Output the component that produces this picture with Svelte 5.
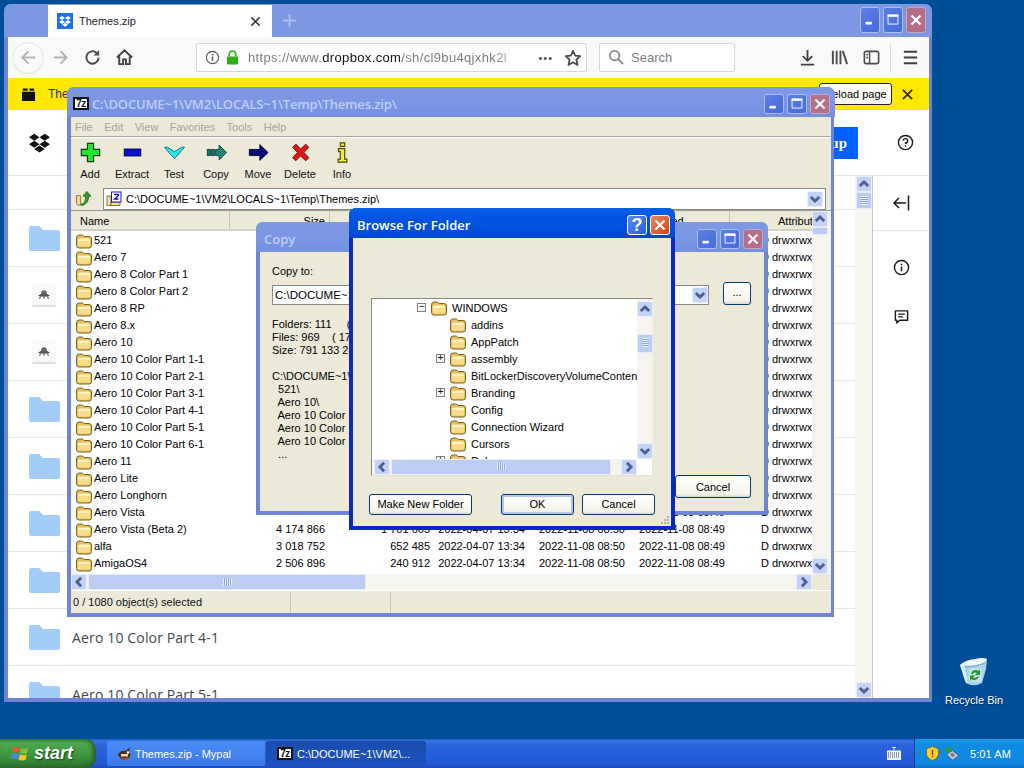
<script lang="ts">
	// 7-Zip file list behind the dialogs
	const names = [
		'521', 'Aero 7', 'Aero 8 Color Part 1', 'Aero 8 Color Part 2', 'Aero 8 RP', 'Aero 8.x', 'Aero 10',
		'Aero 10 Color Part 1-1', 'Aero 10 Color Part 2-1', 'Aero 10 Color Part 3-1', 'Aero 10 Color Part 4-1',
		'Aero 10 Color Part 5-1', 'Aero 10 Color Part 6-1', 'Aero 11', 'Aero Lite', 'Aero Longhorn', 'Aero Vista'
	];
	const sized = [
		{ name: 'Aero Vista (Beta 2)', size: '4 174 866', packed: '1 701 665' },
		{ name: 'alfa', size: '3 018 752', packed: '652 485' },
		{ name: 'AmigaOS4', size: '2 506 896', packed: '240 912' }
	];
	const rows = [...names.map((name) => ({ name, size: '', packed: '' })), ...sized];

	const menus = ['File', 'Edit', 'View', 'Favorites', 'Tools', 'Help'];
	const tools = ['Add', 'Extract', 'Test', 'Copy', 'Move', 'Delete', 'Info'];

	// Dropbox page behind everything
	const pageRows = [
		{ kind: 'folder', label: 'Aero 8.x' },
		{ kind: 'file', label: 'Aero 9.zip' },
		{ kind: 'file', label: 'Aero 9 RP.zip' },
		{ kind: 'folder', label: 'Aero 10' },
		{ kind: 'folder', label: 'Aero 10 Color Part 1-1' },
		{ kind: 'folder', label: 'Aero 10 Color Part 2-1' },
		{ kind: 'folder', label: 'Aero 10 Color Part 3-1' },
		{ kind: 'folder', label: 'Aero 10 Color Part 4-1' },
		{ kind: 'folder', label: 'Aero 10 Color Part 5-1' }
	];

	const tree = [
		{ label: 'WINDOWS', depth: 0, sign: '−' },
		{ label: 'addins', depth: 1, sign: '' },
		{ label: 'AppPatch', depth: 1, sign: '' },
		{ label: 'assembly', depth: 1, sign: '+' },
		{ label: 'BitLockerDiscoveryVolumeContent', depth: 1, sign: '' },
		{ label: 'Branding', depth: 1, sign: '+' },
		{ label: 'Config', depth: 1, sign: '' },
		{ label: 'Connection Wizard', depth: 1, sign: '' },
		{ label: 'Cursors', depth: 1, sign: '' },
		{ label: 'Debug', depth: 1, sign: '+' }
	];

	const copyInfo = 'Folders: 111     ( 111)\nFiles: 969    ( 17 969)\nSize: 791 133 248\n\nC:\\DOCUME~1\\VM2\\LOCALS~1\\Temp\\\n  521\\\n  Aero 10\\\n  Aero 10 Color Part 1-1\\\n  Aero 10 Color Part 2-1\\\n  Aero 10 Color Part 3-1\\\n  ...';
</script>

{#snippet folder()}
	<svg class="xpfolder" viewBox="0 0 16 16" aria-hidden="true">
		<path d="M.5 5 Q.5 2 3 2 H6 Q7 2 8 3.500 H13 Q15.500 3.500 15.500 6 V12.500 Q15.500 15 13 15 H3 Q.5 15 .5 12.500 Z" fill="#e6bd58" stroke="#7c6526" />
		<path d="M1.800 7 Q1.800 5.500 3.500 5.500 H12.500 Q14.200 5.500 14.200 7 V8 H1.800 Z" fill="#fdf2c2" />
		<path d="M1.800 8 H14.200 V12 Q14.200 13.700 12.500 13.700 H3.500 Q1.800 13.700 1.800 12 Z" fill="#f8dc8a" />
	</svg>
{/snippet}

{#snippet chevron(dir)}
	<span class="sbtn {dir}">
		<svg viewBox="0 0 10 10" aria-hidden="true"><path d="M2 6.500 L5 3.500 L8 6.500" fill="none" stroke="#4a6090" stroke-width="2" /></svg>
	</span>
{/snippet}

{#snippet sevenz()}
	<span class="sevenz">7z</span>
{/snippet}

{#snippet dropbox(color)}
	<svg viewBox="0 0 24 24" aria-hidden="true">
		<path fill={color} d="M6 2 L12 6 L6 10 L0 6Z M18 2 L24 6 L18 10 L12 6Z M6 10 L12 14 L6 18 L0 14Z M18 10 L24 14 L18 18 L12 14Z M12 15.500 L18 19.500 L12 23.500 L6 19.500Z" />
	</svg>
{/snippet}

{#snippet captionBtns(active)}
	<span class="capbtn" class:active>
		<svg viewBox="0 0 20 20" aria-hidden="true"><rect x="5" y="12" width="7" height="3" fill="#fff" /></svg>
	</span>
	<span class="capbtn" class:active>
		<svg viewBox="0 0 20 20" aria-hidden="true"><rect x="4.500" y="4.500" width="11" height="10" fill="none" stroke="#fff" /><rect x="4" y="4" width="12" height="2.500" fill="#fff" /></svg>
	</span>
	<span class="capbtn close" class:active>
		<svg viewBox="0 0 20 20" aria-hidden="true"><path d="M5 5 L15 15 M15 5 L5 15" stroke="#fff" stroke-width="2.400" /></svg>
	</span>
{/snippet}

<div class="desktop">
	<div class="spacer"></div>

	<!-- Mypal browser -->
	<section class="window browser">
		<div class="browser-title">
			<div class="tab">
				<span class="favicon">{@render dropbox('#fff')}</span>
				<span class="tab-text">Themes.zip</span>
				<svg class="tab-x" viewBox="0 0 12 12" aria-hidden="true"><path d="M1.500 1.500 L10.500 10.500 M10.500 1.500 L1.500 10.500" stroke="#333" stroke-width="1.600" /></svg>
			</div>
			<svg class="newtab" viewBox="0 0 16 16" aria-hidden="true"><path d="M8 1 V15 M1 8 H15" stroke="#a9bff0" stroke-width="2" /></svg>
			<div class="caps tall">{@render captionBtns(false)}</div>
		</div>

		<div class="navbar">
			<span class="navbtn back">
				<svg viewBox="0 0 20 20" aria-hidden="true"><path d="M17 10 H4 M10 3.500 L3.500 10 L10 16.500" fill="none" stroke="#b4b4b6" stroke-width="2" /></svg>
			</span>
			<span class="navbtn">
				<svg viewBox="0 0 20 20" aria-hidden="true"><path d="M3 10 H16 M10 3.500 L16.500 10 L10 16.500" fill="none" stroke="#b4b4b6" stroke-width="2" /></svg>
			</span>
			<span class="navbtn">
				<svg viewBox="0 0 20 20" aria-hidden="true"><path d="M16.500 10 A6.500 6.500 0 1 1 14.400 5.200" fill="none" stroke="#4a4a4f" stroke-width="2" /><path d="M17 2 V8 H11 Z" fill="#4a4a4f" /></svg>
			</span>
			<span class="navbtn">
				<svg viewBox="0 0 20 20" aria-hidden="true"><path d="M2 10 L10 2.500 L18 10 M4.500 9 V17 H8.500 V12 H11.500 V17 H15.500 V9" fill="none" stroke="#3f3f44" stroke-width="2" /></svg>
			</span>

			<div class="urlbar">
				<svg class="info" viewBox="0 0 16 16" aria-hidden="true"><circle cx="8" cy="8" r="6.500" fill="none" stroke="#55555a" stroke-width="1.200" /><rect x="7.200" y="7" width="1.600" height="4.500" fill="#55555a" /><rect x="7.200" y="4.200" width="1.600" height="1.600" fill="#55555a" /></svg>
				<svg class="lock" viewBox="0 0 14 16" aria-hidden="true"><path d="M3.500 7 V4.500 A3.500 3.500 0 0 1 10.500 4.500 V7" fill="none" stroke="#37b01f" stroke-width="1.800" /><rect x="1" y="7" width="12" height="8.500" rx="1" fill="#2fae17" /></svg>
				<span class="url">https://www.<b>dropbox.com</b>/sh/cl9bu4qjxhk2l</span>
				<span class="dots">•••</span>
				<svg class="star" viewBox="0 0 20 20" aria-hidden="true"><path d="M10 2 L12.400 7.300 L18 8 L13.800 11.900 L15 17.700 L10 14.800 L5 17.700 L6.200 11.900 L2 8 L7.600 7.300 Z" fill="none" stroke="#4a4a4f" stroke-width="2" stroke-linejoin="round" /></svg>
			</div>

			<div class="searchbar">
				<svg viewBox="0 0 18 18" aria-hidden="true"><circle cx="7" cy="7" r="5" fill="none" stroke="#858589" stroke-width="1.800" /><path d="M10.800 10.800 L16 16" stroke="#858589" stroke-width="2" /></svg>
				<span>Search</span>
			</div>

			<span class="navbtn first">
				<svg viewBox="0 0 20 20" aria-hidden="true"><path d="M10 2 V13 M5 8.500 L10 13.500 L15 8.500 M3 17.500 H17" fill="none" stroke="#3f3f44" stroke-width="1.900" /></svg>
			</span>
			<span class="navbtn">
				<svg viewBox="0 0 20 20" aria-hidden="true"><path d="M3 3 V17 M7 3 V17 M11 3 V17 M13.500 3 L18 17" fill="none" stroke="#4a4a4f" stroke-width="2" /></svg>
			</span>
			<span class="navbtn">
				<svg viewBox="0 0 20 20" aria-hidden="true"><rect x="2.500" y="3.500" width="15" height="13" rx="2" fill="none" stroke="#4a4a4f" stroke-width="1.700" /><path d="M8 3.500 V16.500 M4.500 7 H6.500 M4.500 10 H6.500" stroke="#4a4a4f" stroke-width="1.500" /></svg>
			</span>
			<span class="navsep"></span>
			<span class="navbtn">
				<svg viewBox="0 0 20 20" aria-hidden="true"><path d="M3 4 H17 M3 10 H17 M3 16 H17" stroke="#3f3f44" stroke-width="2" /></svg>
			</span>
		</div>

		<div class="notice">
			<svg class="notice-icon" viewBox="0 0 16 16" aria-hidden="true"><path d="M1 5 H15 V15 H1 Z M2 1.500 H7 V4 H2 Z M9 1.500 H14 V4 H9 Z" fill="#111" /></svg>
			<span class="notice-text">The</span>
			<span class="reload">Reload page</span>
			<svg class="notice-x" viewBox="0 0 12 12" aria-hidden="true"><path d="M1 1 L11 11 M11 1 L1 11" stroke="#3a2a00" stroke-width="2" /></svg>
		</div>

		<div class="page">
			<div class="page-head">
				<span class="logo">{@render dropbox('#111')}</span>
				<span class="signup">Sign up</span>
				<svg class="help" viewBox="0 0 18 18" aria-hidden="true"><circle cx="9" cy="9" r="7.500" fill="none" stroke="#1e1919" stroke-width="1.500" /><path d="M6.700 7 A2.300 2.300 0 1 1 9 9.500 V10.500 M9 12 V13.500" fill="none" stroke="#1e1919" stroke-width="1.500" /></svg>
			</div>
			<div class="page-body">
				<div class="page-list">
					<div class="page-crumb"></div>
					{#each pageRows as row (row.label)}
						<div class="page-row">
							{#if row.kind === 'folder'}
								<svg class="pfolder" viewBox="0 0 31 25" aria-hidden="true"><path d="M0 2 Q0 0 2 0 H10 L14 4 H29 Q31 4 31 6 V23 Q31 25 29 25 H2 Q0 25 0 23 Z" fill="#a3ccf6" /></svg>
							{:else}
								<span class="tile">
									<svg viewBox="0 0 16 12" aria-hidden="true"><path d="M4.500 5 Q4.500 1 8 1 Q11.500 1 11.500 5 Z" fill="#66666b" /><path d="M1 7.500 Q4 4.500 8 4.500 Q12 4.500 15 7.500 Q12 8.500 8 8.500 Q4 8.500 1 7.500 Z" fill="#55555a" /><path d="M4 8 L3 11 M8 8 V11 M12 8 L13 11" stroke="#66666b" stroke-width="1.300" /></svg>
								</span>
							{/if}
							<span class="page-name">{row.label}</span>
						</div>
					{/each}
				</div>
				<div class="page-scroll">
					{@render chevron('up')}
					<span class="sthumb v page-thumb"><i></i></span>
					<span class="fill"></span>
					{@render chevron('down')}
				</div>
				<div class="rail">
					<div class="rail-top">
						<svg viewBox="0 0 20 20" aria-hidden="true"><path d="M15 10 H3 M8 5 L3 10 L8 15 M17.500 2.500 V17.500" fill="none" stroke="#1e1919" stroke-width="1.500" /></svg>
					</div>
					<svg viewBox="0 0 18 18" aria-hidden="true"><circle cx="9" cy="9" r="7.500" fill="none" stroke="#1e1919" stroke-width="1.500" /><path d="M9 8 V13 M9 5 V6.500" stroke="#1e1919" stroke-width="1.600" /></svg>
					<svg viewBox="0 0 18 18" aria-hidden="true"><path d="M2.500 3 H15.500 V13 H7 L4 16 V13 H2.500 Z" fill="none" stroke="#1e1919" stroke-width="1.500" stroke-linejoin="round" /><path d="M5.500 6.500 H12.500 M5.500 9.500 H10.500" stroke="#1e1919" stroke-width="1.300" /></svg>
				</div>
			</div>
		</div>
	</section>

	<!-- 7-Zip file manager -->
	<section class="window zip">
		<header class="wtitle">
			{@render sevenz()}
			<span class="wtitle-text faded">C:\DOCUME~1\VM2\LOCALS~1\Temp\Themes.zip\</span>
			<div class="caps">{@render captionBtns(false)}</div>
		</header>
		<div class="zip-inner">
			<nav class="menu">
				{#each menus as m (m)}<span>{m}</span>{/each}
			</nav>
			<div class="tools">
				{#each tools as t (t)}
					<div class="tool">
						<svg viewBox="0 0 24 24" aria-hidden="true">
							{#if t === 'Add'}
								<path d="M8.500 1.500 H15.500 V8.500 H22.500 V15.500 H15.500 V22.500 H8.500 V15.500 H1.500 V8.500 H8.500 Z" fill="#1fe62b" stroke="#0a3c10" stroke-width="1.300" />
							{:else if t === 'Extract'}
								<rect x="2.500" y="8" width="19" height="8" fill="#0a12c8" stroke="#06064a" />
							{:else if t === 'Test'}
								<path d="M.5 6 H4 L12 11 L20 6 H23.500 L12 19 Z" fill="#25e8e8" stroke="#0d6d6d" />
							{:else if t === 'Copy'}
								<path d="M11 8.500 H15 V3.500 L23.500 12 L15 20.500 V15.500 H11 Z" fill="#16857c" stroke="#0a3d40" /><rect x="1.500" y="8.500" width="3.500" height="7" fill="#127a70" stroke="#0a3d40" /><rect x="6.500" y="8.500" width="3" height="7" fill="#127a70" stroke="#0a3d40" />
							{:else if t === 'Move'}
								<path d="M1.500 8.500 H13.500 V3 L23 12 L13.500 21 V15.500 H1.500 Z" fill="#0a0a78" stroke="#05052e" />
							{:else if t === 'Delete'}
								<path d="M3 6 L7 2.500 L12 8 L18 2.500 L21.500 6 L16 12 L21.500 18 L18 21.500 L12 16 L6.500 21.500 L3 18 L8.500 12 Z" fill="#dc1818" stroke="#6a0a0a" />
							{:else}
								<path d="M9.500 1 H14.500 V5 H9.500 Z M7.500 7.500 H14.500 V19.500 H17 V23 H7 V19.500 H9.500 V11 H7.500 Z" fill="#f4ee30" stroke="#4a4400" stroke-width="1.300" />
							{/if}
						</svg>
						<span>{t}</span>
					</div>
				{/each}
			</div>
			<div class="addr">
				<svg class="upfolder" viewBox="0 0 18 18" aria-hidden="true"><path d="M1.500 6 H6 V16 H3 L1.500 14 Z" fill="#f4dc80" stroke="#8c7430" /><path d="M6 15.500 Q12 14 11 6.500 H8.500 L12.500 1.500 L17 6.500 H14.500 Q14.500 14 8 16.500 Z" fill="#2f9e2f" stroke="#1a5a1a" stroke-width=".8" /></svg>
				<div class="combo">
					<svg class="zicon" viewBox="0 0 16 16" aria-hidden="true"><path d="M1 5 H5 V14.500 H1 Z" fill="#f3e09a" stroke="#8c7430" /><path d="M5 14.500 H14 V11 H5 Z" fill="#f3e09a" stroke="#8c7430" /><rect x="5.500" y="1" width="9.500" height="10" fill="#fff" stroke="#1414b4" /><path d="M8 3.500 H12.500 V4.500 L8.500 8 H12.500" fill="none" stroke="#1414b4" stroke-width="1.300" /></svg>
					<span class="combo-text">C:\DOCUME~1\VM2\LOCALS~1\Temp\Themes.zip\</span>
					{@render chevron('down')}
				</div>
			</div>

			<div class="list">
				<div class="list-main">
					<div class="grid head">
						<span class="c-name">Name</span>
						<span class="num">Size</span>
						<span class="num">Packed Size</span>
						<span>Modified</span>
						<span>Created</span>
						<span>Accessed</span>
						<span class="attr">Attributes</span>
					</div>
					<div class="rows">
						{#each rows as r (r.name)}
							<div class="grid row">
								<span class="c-name">{@render folder()}{r.name}</span>
								<span class="num">{r.size}</span>
								<span class="num">{r.packed}</span>
								<span class="num">2022-04-07 13:34</span>
								<span class="num">2022-11-08 08:50</span>
								<span class="num">2022-11-08 08:49</span>
								<span class="attrv">D drwxrwxrwx</span>
							</div>
						{/each}
					</div>
					<div class="hscroll">
						{@render chevron('left')}
						<span class="sthumb h zip-thumb"><i></i></span>
						<span class="fill"></span>
						{@render chevron('right')}
					</div>
				</div>
				<div class="vscroll">
					{@render chevron('up')}
					<span class="sthumb v zip-vthumb"></span>
					<span class="fill"></span>
					{@render chevron('down')}
					<span class="corner"></span>
				</div>
			</div>

			<footer class="status">
				<span class="st1">0 / 1080 object(s) selected</span>
				<span class="st2"></span>
				<span class="st3"></span>
			</footer>
		</div>
	</section>

	<!-- Copy dialog -->
	<section class="window copy">
		<header class="wtitle">
			<span class="wtitle-text faded">Copy</span>
			<div class="caps">{@render captionBtns(false)}</div>
		</header>
		<div class="copy-inner">
			<div class="copy-label">Copy to:</div>
			<div class="copy-row">
				<div class="copy-input">
					<span>C:\DOCUME~1\VM2\LOCALS~1\Temp\</span>
					{@render chevron('down')}
				</div>
				<span class="btn dots-btn">...</span>
			</div>
			<pre class="copy-info">{copyInfo}</pre>
			<div class="copy-foot"><span class="btn copy-cancel">Cancel</span></div>
		</div>
	</section>

	<!-- Browse For Folder dialog -->
	<section class="window browse">
		<header class="wtitle active">
			<span class="wtitle-text">Browse For Folder</span>
			<div class="caps browse-caps">
				<span class="capbtn active help-btn">?</span>
				<span class="capbtn close active">
					<svg viewBox="0 0 20 20" aria-hidden="true"><path d="M5 5 L15 15 M15 5 L5 15" stroke="#fff" stroke-width="2.400" /></svg>
				</span>
			</div>
		</header>
		<div class="browse-inner">
			<div class="treebox">
				<div class="tree">
					{#each tree as node (node.label)}
						<div class="node" class:child={node.depth === 1}>
							<span class="expander" class:show={node.sign}>{node.sign}</span>
							{@render folder()}
							<span class="node-label">{node.label}</span>
						</div>
					{/each}
				</div>
				<div class="tree-v">
					{@render chevron('up')}
					<span class="sthumb v tree-thumb"><i></i></span>
					<span class="fill"></span>
					{@render chevron('down')}
				</div>
				<div class="tree-h">
					{@render chevron('left')}
					<span class="sthumb h tree-hthumb"><i></i></span>
					<span class="fill"></span>
					{@render chevron('right')}
				</div>
			</div>
			<div class="browse-btns">
				<span class="btn newfolder">Make New Folder</span>
				<span class="btn ok">OK</span>
				<span class="btn cancel">Cancel</span>
			</div>
			<svg class="grip" viewBox="0 0 10 10" aria-hidden="true"><path d="M7 1 h2 v2 h-2z M4 4 h2 v2 h-2z M7 4 h2 v2 h-2z M1 7 h2 v2 h-2z M4 7 h2 v2 h-2z M7 7 h2 v2 h-2z" fill="#b5b29f" /></svg>
		</div>
	</section>

	<!-- Recycle Bin -->
	<div class="recycle">
		<svg viewBox="0 0 30 30" aria-hidden="true">
			<path d="M1 8 L28 2 L27 12 L23 26 Q16 30 9 27 Z" fill="#a9d3ef" />
			<path d="M1 8 L6 24 Q7 27 9 27 L5 8 Z" fill="#dff0fa" />
			<path d="M1 8 Q6 3 16 2 Q24 0 28 2 Q26 7 15 8.500 Q6 10 1 8 Z" fill="#eef8fe" />
			<path d="M5 8.500 Q14 10 27 5 L26 7 Q16 11 6 10.500 Z" fill="#7fb4d8" />
			<rect x="10" y="11" width="13" height="14" rx="3" fill="#d6efd6" opacity=".6" />
			<path d="M12 16 Q15 11 20 14 L21 12 V18 H16 L18 16 Q15 14.500 13.500 17.500 Z M20 20 Q17 25 12 22 L11 24 V18.500 H16 L14 20.500 Q17 22 18.500 19.500 Z" fill="#1f9a2a" />
		</svg>
		<span>Recycle Bin</span>
	</div>

	<!-- Taskbar -->
	<footer class="taskbar">
		<div class="start">
			<svg viewBox="0 0 20 20" aria-hidden="true">
				<path d="M2 4 Q5 2.500 9 4 L8 9 Q5 7.500 1 9 Z" fill="#e8552e" />
				<path d="M10.500 4.500 Q14 6 18 4 L17 9.500 Q13 11 9.500 9.500 Z" fill="#7fc13a" />
				<path d="M1 10.500 Q4.500 9 8 10.500 L7 16 Q4 14.500 0 16 Z" fill="#4d83e0" />
				<path d="M9 11 Q13 12.500 16.500 11 L15.500 16.500 Q12 18 8 16.500 Z" fill="#f6c52e" />
			</svg>
			<span>start</span>
		</div>
		<div class="task light">
			<svg viewBox="0 0 16 16" aria-hidden="true"><path d="M1 9 Q3 4 9 5 L13 1 L12 6 Q15 9 12 12 Q8 15 4 13 Z" fill="#4a2f18" /><path d="M4 8 H11 V10.500 H4 Z" fill="#e9d9b8" /><path d="M3 11 Q7 13 11 11 L10 13.500 H5 Z" fill="#b4552a" /><circle cx="11" cy="6.500" r="1.300" fill="#fff" /></svg>
			<span>Themes.zip - Mypal</span>
		</div>
		<div class="task dark">
			{@render sevenz()}
			<span>C:\DOCUME~1\VM2\...</span>
		</div>
		<svg class="kbd" viewBox="0 0 14 13" aria-hidden="true"><rect x="0" y="3.500" width="14" height="9.500" fill="#f4f6fa" /><path d="M1 6 H13 M1 8 H13 M1 10 H13" stroke="#2a3a6a" stroke-dasharray="1 1" /><path d="M7 3.500 V0 M5 .5 H9" stroke="#e2e6f0" /></svg>
		<div class="tray">
			<svg class="shield" viewBox="0 0 14 16" aria-hidden="true"><path d="M7 .5 L13.500 3 V8 Q13.500 13 7 15.500 Q.5 13 .5 8 V3 Z" fill="#f5d230" stroke="#6d5a10" stroke-width=".8" /><path d="M6.200 4 H7.800 V9.500 H6.200 Z M6.200 10.500 H7.800 V12 H6.200 Z" fill="#a33" /></svg>
			<svg class="netpc" viewBox="0 0 16 16" aria-hidden="true"><path d="M1 1.500 L7 .5 L8 5.500 L3 8 Z" fill="#2f9a40" /><path d="M3 9 L9 5 L15.500 10 L9 15 Z" fill="#c9d0d8" stroke="#3c4a66" stroke-width=".7" /><path d="M6 9 L9 7 L12 10 L9 12 Z" fill="#6d7f98" /></svg>
			<span>5:01 AM</span>
		</div>
	</footer>
</div>

<style>
	:global(body) {
		margin: 0;
		background: #004e98;
	}
	.desktop {
		position: relative;
		width: 1024px;
		height: 768px;
		overflow: hidden;
		background: #004e98;
		display: flex;
		flex-direction: column;
		font-family: "Liberation Sans", Arial, sans-serif;
		font-size: 11px;
		color: #000;
	}
	.spacer { flex: 1; }
	svg { display: block; flex: none; }

	/* Shared window chrome */
	.window {
		position: absolute;
		box-sizing: border-box;
		display: flex;
		flex-direction: column;
		background: #6f84d6;
		border-radius: 7px 7px 0 0;
	}
	.wtitle {
		flex: none;
		box-sizing: border-box;
		height: 30px;
		display: flex;
		align-items: center;
		padding: 3px 5px 0 6px;
		background: linear-gradient(#7e98e2, #7b97e4 40%, #7391e0);
		border-radius: 7px 7px 0 0;
		margin: 0 -4px;
	}
	.wtitle.active {
		background: linear-gradient(#0a5fe8, #0054e3 30%, #0050dc 70%, #0046c8);
	}
	.wtitle-text {
		font-family: "Open Sans", "Liberation Sans", sans-serif;
		font-size: 13px;
		font-weight: 600;
		color: #fff;
		white-space: nowrap;
	}
	.wtitle-text.faded { color: #bcd0f4; }
	.caps {
		margin-left: auto;
		display: flex;
		gap: 3px;
	}
	.capbtn {
		width: 20px;
		height: 20px;
		box-sizing: border-box;
		border: 1px solid #a9bdf0;
		border-radius: 3px;
		background: linear-gradient(135deg, #5b7fe4, #466ad8);
		display: block;
	}
	.capbtn svg { width: 18px; height: 18px; }
	.capbtn.close {
		background: #b56f88;
		border-color: #c3a6c0;
	}
	.capbtn.active {
		background: linear-gradient(135deg, #5a8bf0, #2a5fd8);
		border-color: #fff;
	}
	.capbtn.close.active {
		background: linear-gradient(135deg, #e88a5e, #d4401a);
	}
	.help-btn {
		color: #fff;
		font-family: "Liberation Sans", sans-serif;
		font-weight: 700;
		font-size: 18px;
		line-height: 19px;
		text-align: center;
	}
	.sevenz {
		flex: none;
		box-sizing: border-box;
		width: 16px;
		height: 13px;
		background: #fff;
		border: 2px solid #111;
		color: #111;
		font: 700 10px/9px "Liberation Sans", sans-serif;
		text-align: center;
		letter-spacing: -.5px;
	}

	/* Scrollbar pieces */
	.sbtn {
		flex: none;
		box-sizing: border-box;
		width: 16px;
		height: 16px;
		display: block;
		border: 1px solid #e8eefb;
		border-radius: 2px;
		background: #c3d2f5;
	}
	.sbtn svg { width: 14px; height: 14px; }
	.sbtn.down svg { transform: rotate(180deg); }
	.sbtn.left svg { transform: rotate(-90deg); }
	.sbtn.right svg { transform: rotate(90deg); }
	.sthumb {
		flex: none;
		box-sizing: border-box;
		display: block;
		background: #bccdf4;
		border: 1px solid #e4ebfb;
		border-radius: 2px;
	}
	.sthumb i {
		display: block;
		width: 9px;
		height: 7px;
		margin: 3px auto;
		background: repeating-linear-gradient(90deg, #e9effc 0 1px, #8ea6dc 1px 2px);
	}
	.sthumb.v { width: 16px; }
	.sthumb.v i {
		width: 7px;
		height: 9px;
		margin: 3px auto;
		background: repeating-linear-gradient(#e9effc 0 1px, #8ea6dc 1px 2px);
	}
	.fill { flex: 1; }

	/* Browser */
	.browser {
		left: 4px;
		top: 4px;
		width: 928px;
		height: 698px;
		padding: 0 3px 4px 4px;
	}
	.browser-title {
		flex: none;
		height: 33px;
		display: flex;
		align-items: flex-end;
		background: #7c98e3;
		margin: 0 -3px 0 -4px;
		padding: 0 3px 0 44px;
		border-radius: 7px 7px 0 0;
	}
	.tab {
		box-sizing: border-box;
		width: 224px;
		height: 32px;
		background: #fff;
		display: flex;
		align-items: center;
		padding: 0 11px 0 9px;
	}
	.favicon {
		width: 16px;
		height: 16px;
		background: #1e6ff0;
		padding: 2px;
		box-sizing: border-box;
		display: block;
	}
	.tab-text { margin-left: 6px; flex: 1; color: #222; }
	.tab-x { width: 11px; height: 11px; }
	.newtab { width: 15px; height: 15px; margin: 0 0 9px 10px; }
	.caps.tall { align-self: flex-start; padding-top: 3px; margin-right: 3px; }
	.caps.tall .capbtn { height: 26px; }
	.caps.tall .capbtn svg { margin-top: 3px; }

	.navbar {
		flex: none;
		height: 41px;
		background: #f9f9fa;
		display: flex;
		align-items: center;
		padding-left: 4px;
		box-sizing: border-box;
	}
	.navbtn {
		flex: none;
		width: 32px;
		height: 32px;
		display: flex;
		align-items: center;
		justify-content: center;
		box-sizing: border-box;
	}
	.navbtn svg { width: 19px; height: 19px; }
	.navbtn.back {
		border: 1px solid #e4e4e6;
		border-radius: 50%;
		background: #fafafb;
	}
	.navbtn.first { margin-left: 56px; }
	.urlbar, .searchbar {
		flex: none;
		box-sizing: border-box;
		height: 29px;
		background: #fff;
		border: 1px solid #d6d6d8;
		display: flex;
		align-items: center;
		border-radius: 2px;
	}
	.urlbar {
		width: 391px;
		margin-left: 56px;
		padding-left: 8px;
		position: relative;
	}
	.urlbar .info { width: 15px; height: 15px; }
	.urlbar .lock { width: 13px; height: 15px; margin-left: 6px; }
	.url {
		margin-left: 9px;
		font-size: 13px;
		letter-spacing: .35px;
		color: #7d7d84;
		white-space: nowrap;
		width: 280px;
		overflow: hidden;
		-webkit-mask-image: linear-gradient(90deg, #000 88%, transparent 98%);
		mask-image: linear-gradient(90deg, #000 88%, transparent 98%);
	}
	.url b { font-weight: 400; color: #111; }
	.dots { color: #4a4a4f; font-size: 11px; letter-spacing: 1px; margin: 0 11px 0 auto; }
	.star { width: 18px; height: 18px; margin-right: 4px; }
	.searchbar {
		width: 136px;
		margin-left: 12px;
		padding-left: 8px;
		gap: 6px;
		color: #7d7d84;
		font-size: 13px;
	}
	.searchbar svg { width: 17px; height: 17px; }
	.navsep {
		flex: none;
		width: 1px;
		height: 30px;
		background: #dcdcde;
		margin: 0 3px;
	}

	.notice {
		flex: none;
		height: 32px;
		background: #ffe900;
		display: flex;
		align-items: center;
		padding-left: 13px;
		box-sizing: border-box;
		font-size: 12px;
	}
	.notice-icon { width: 15px; height: 15px; }
	.notice-text { margin-left: 12px; color: #333; }
	.reload {
		box-sizing: border-box;
		margin-left: auto;
		width: 73px;
		height: 22px;
		line-height: 20px;
		text-align: center;
		background: #fcfcf4;
		border: 1px solid #222;
		border-radius: 3px;
		font-size: 11px;
		white-space: nowrap;
	}
	.notice-x { width: 11px; height: 11px; margin: 0 16px 0 10px; }

	.page {
		flex: 1;
		min-height: 0;
		background: #fff;
		display: flex;
		flex-direction: column;
	}
	.page-head {
		flex: none;
		height: 66px;
		box-sizing: border-box;
		border-bottom: 1px solid #e6e8ea;
		display: flex;
		align-items: center;
		padding-left: 21px;
	}
	.logo { display: block; width: 21px; height: 21px; }
	.signup {
		margin-left: auto;
		box-sizing: border-box;
		width: 64px;
		height: 32px;
		padding-right: 11px;
		text-align: right;
		background: #0061fe;
		color: #fff;
		font: 700 15px/32px "Liberation Serif", serif;
	}
	.help { width: 17px; height: 17px; margin: 0 15px 0 39px; }
	.page-body {
		flex: 1;
		min-height: 0;
		display: flex;
		overflow: hidden;
	}
	.page-list { flex: none; width: 847px; }
	.page-crumb {
		height: 34px;
		box-sizing: border-box;
		border-bottom: 1px solid #e6e8ea;
	}
	.page-row {
		box-sizing: border-box;
		height: 57px;
		display: flex;
		align-items: center;
		border-bottom: 1px solid #e6e8ea;
		padding-left: 21px;
	}
	.pfolder { width: 31px; height: 25px; }
	.tile {
		box-sizing: border-box;
		display: flex;
		align-items: center;
		justify-content: center;
		width: 24px;
		height: 24px;
		margin: 0 3px;
		background: #f9f9fa;
		border-bottom: 2px solid #dcdcdc;
		border-radius: 2px;
	}
	.tile svg { width: 14px; height: 11px; }
	.page-name {
		margin-left: 12px;
		font-family: "Open Sans", sans-serif;
		font-size: 14px;
		letter-spacing: .15px;
		color: #41484e;
	}
	.page-scroll {
		flex: none;
		box-sizing: border-box;
		width: 18px;
		background: #f6f6f1;
		border-right: 1px solid #c8c8c8;
		display: flex;
		flex-direction: column;
		padding: 0 1px;
	}
	.page-thumb { height: 17px; }
	.rail {
		flex: 1;
		display: flex;
		flex-direction: column;
		align-items: center;
	}
	.rail > svg { width: 17px; height: 17px; }
	.rail > svg:nth-child(2) { margin: 28px 0 0; }
	.rail > svg:nth-child(3) { margin: 32px 0 0; }
	.rail-top {
		box-sizing: border-box;
		width: 100%;
		height: 55px;
		border-bottom: 1px solid #e6e8ea;
		display: flex;
		align-items: center;
		justify-content: center;
	}
	.rail-top svg { width: 20px; height: 20px; }

	/* 7-Zip */
	.zip {
		left: 67px;
		top: 87px;
		width: 767px;
		height: 530px;
		padding: 0 3px 4px 4px;
	}
	.zip .wtitle-text { margin-left: 3px; letter-spacing: -.15px; }
	.zip-inner {
		flex: 1;
		min-height: 0;
		background: #ece9d8;
		display: flex;
		flex-direction: column;
	}
	.menu {
		flex: none;
		height: 20px;
		box-sizing: border-box;
		display: flex;
		gap: 11.5px;
		align-items: center;
		padding-left: 4px;
		color: #a8a594;
		border-bottom: 1px solid #aca899;
		box-shadow: 0 1px 0 #fff;
	}
	.tools {
		flex: none;
		height: 50px;
		display: flex;
		box-sizing: border-box;
		padding-top: 5px;
		margin-left: -2px;
	}
	.tool {
		flex: none;
		width: 42px;
		display: flex;
		flex-direction: column;
		align-items: center;
		color: #111;
	}
	.tool svg { width: 21px; height: 21px; margin-bottom: 5px; }
	.addr {
		flex: none;
		height: 23px;
		display: flex;
		align-items: center;
		padding-left: 4px;
		box-sizing: border-box;
	}
	.upfolder { width: 17px; height: 17px; }
	.combo {
		flex: none;
		box-sizing: border-box;
		margin-left: 11px;
		width: 723px;
		height: 22px;
		background: #fff;
		border: 1px solid #8a8a8a;
		display: flex;
		align-items: center;
		padding: 0 2px;
	}
	.zicon { width: 16px; height: 16px; }
	.combo-text { margin-left: 4px; flex: 1; }
	.list {
		flex: none;
		height: 380px;
		display: flex;
		border-top: 1px solid #9a9a8c;
		box-sizing: border-box;
		background: #fff;
	}
	.list-main {
		flex: none;
		width: 741px;
		display: flex;
		flex-direction: column;
		overflow: hidden;
	}
	.grid {
		display: grid;
		grid-template-columns: 159px 100px 105px 95px 100px 100px 82px;
		white-space: nowrap;
	}
	.head {
		flex: none;
		height: 20px;
		line-height: 20px;
		background: #ece9d8;
		border-bottom: 2px solid #d6d2c2;
		box-sizing: border-box;
	}
	.head span { padding-left: 6px; border-right: 1px solid #c9c6b6; overflow: hidden; }
	.head .c-name { padding-left: 9px; }
	.head .num { text-align: right; padding-right: 4px; padding-left: 0; }
	.head .attr { padding-left: 48px; border: 0; }
	.rows { flex: 1; overflow: hidden; padding-top: 1px; }
	.row { height: 17px; line-height: 17px; }
	.row .c-name { display: flex; align-items: center; gap: 2px; padding-left: 5px; }
	.xpfolder { width: 16px; height: 16px; }
	.num { text-align: right; padding-right: 5px; }
	.attrv { padding-left: 31px; overflow: hidden; }
	.hscroll, .tree-h {
		flex: none;
		height: 16px;
		display: flex;
		background: #f5f4ee;
	}
	.zip-thumb { width: 278px; height: 16px; margin-left: 1px; }
	.vscroll {
		flex: 1;
		display: flex;
		flex-direction: column;
		background: #f5f4ee;
	}
	.zip-vthumb { height: 8px; }
	.corner { height: 16px; background: #ece9d8; }
	.status {
		flex: 1;
		display: flex;
		align-items: center;
		border-top: 1px solid #fff;
		padding: 1px 0 0 2px;
		color: #111;
	}
	.st1 { width: 217px; border-right: 1px solid #c9c6b6; line-height: 21px; flex: none; }
	.st2 { width: 99px; height: 21px; border-right: 1px solid #c9c6b6; flex: none; }

	/* Copy dialog */
	.copy {
		left: 256px;
		top: 222px;
		width: 512px;
		height: 293px;
		padding: 0 4px 4px;
	}
	.copy .wtitle { padding-left: 8px; }
	.copy-inner {
		flex: 1;
		min-height: 0;
		background: #ece9d8;
		display: flex;
		flex-direction: column;
		padding: 13px 13px 13px 12px;
	}
	.copy-label { line-height: 13px; }
	.copy-row {
		display: flex;
		align-items: flex-end;
		margin-top: 4px;
		gap: 14px;
	}
	.copy-input {
		flex: none;
		box-sizing: border-box;
		width: 437px;
		height: 20px;
		background: #fff;
		border: 1px solid #8a8a8a;
		display: flex;
		align-items: center;
		justify-content: space-between;
		padding-left: 2px;
		font-size: 11.5px;
	}
	.btn {
		box-sizing: border-box;
		display: block;
		text-align: center;
		background: linear-gradient(#fff, #f5f4ea 85%, #dcd8c8);
		border: 1px solid #003c74;
		border-radius: 3px;
		white-space: nowrap;
	}
	.dots-btn { width: 28px; height: 23px; line-height: 19px; }
	.copy-info {
		margin: 13px 0 0;
		font: inherit;
		line-height: 13px;
	}
	.copy-foot {
		margin-top: auto;
		display: flex;
		justify-content: flex-end;
	}
	.copy-cancel { width: 76px; height: 23px; line-height: 22px; }

	/* Browse for folder */
	.browse {
		left: 349px;
		top: 208px;
		width: 326px;
		height: 322px;
		padding: 0 4px 4px;
		background: #0a28c8;
	}
	.browse .wtitle { padding-left: 8px; }
	.browse-inner {
		position: relative;
		flex: 1;
		min-height: 0;
		background: #ece9d8;
		padding: 60px 0 0 18px;
		display: flex;
		flex-direction: column;
	}
	.treebox {
		flex: none;
		box-sizing: border-box;
		width: 282px;
		height: 178px;
		background: #fff;
		border: 1px solid #8a8a80;
		border-right-color: #e4e2d4;
		border-bottom-color: #e4e2d4;
		display: grid;
		grid-template-columns: 265px 16px;
		grid-template-rows: 160px 16px;
	}
	.tree { overflow: hidden; }
	.node {
		height: 17px;
		display: flex;
		align-items: center;
		white-space: nowrap;
		padding-left: 45px;
	}
	.node.child { padding-left: 64px; }
	.expander {
		box-sizing: border-box;
		flex: none;
		width: 9px;
		height: 9px;
		margin-right: 5px;
		visibility: hidden;
		border: 1px solid #808080;
		font: 10px/7px "Liberation Mono", monospace;
		text-align: center;
		color: #111;
		background: #f6f6f2;
	}
	.expander.show { visibility: visible; }
	.node-label { margin-left: 5px; }
	.tree-v {
		background: #f5f4ee;
		display: flex;
		flex-direction: column;
		padding-top: 2px;
	}
	.tree-thumb { height: 19px; margin-top: 17px; }
	.tree-thumb i { margin-top: 4px; }
	.tree-h {
		grid-column: 1;
		padding-left: 2px;
		width: 263px;
	}
	.tree-hthumb { width: 220px; height: 16px; margin-left: 1px; }
	.browse-btns {
		display: flex;
		margin: 18px 0 0 -2px;
	}
	.browse-btns .btn { height: 21px; line-height: 19px; }
	.newfolder { width: 103px; }
	.ok {
		width: 73px;
		margin-left: 29px;
		box-shadow: inset 0 0 0 2px #b4c8ee;
	}
	.cancel { width: 73px; margin-left: 8px; }
	.grip {
		position: absolute;
		right: 1px;
		bottom: 1px;
		width: 10px;
		height: 10px;
	}

	/* Desktop icon */
	.recycle {
		position: absolute;
		left: 934px;
		top: 657px;
		width: 80px;
		display: flex;
		flex-direction: column;
		align-items: center;
		color: #fff;
		gap: 7px;
		text-shadow: 1px 1px 1px #002a55;
	}
	.recycle svg { width: 30px; height: 30px; }

	/* Taskbar */
	.taskbar {
		position: relative;
		flex: none;
		height: 29px;
		display: flex;
		align-items: flex-end;
		background: linear-gradient(#1f5fc9, #3a74e4 8%, #2a63dc 20%, #2459d6 85%, #1d48b8);
		color: #fff;
	}
	.start {
		flex: none;
		align-self: stretch;
		box-sizing: border-box;
		width: 96px;
		display: flex;
		align-items: center;
		gap: 4px;
		padding-left: 11px;
		background: linear-gradient(#3f8c43, #4ea850 12%, #3c953e 60%, #2c6e30);
		border-radius: 0 10px 10px 0;
		box-shadow: inset -3px 0 4px #2a5c2a;
		font: italic 700 18px "Liberation Sans", sans-serif;
		text-shadow: 1px 1px 2px #1a3a1a;
	}
	.start svg { width: 19px; height: 19px; }
	.task {
		flex: none;
		box-sizing: border-box;
		height: 25px;
		margin-bottom: 2px;
		display: flex;
		align-items: center;
		white-space: nowrap;
		border-radius: 2px;
	}
	.task.light {
		width: 158px;
		margin-left: 11px;
		gap: 2px;
		padding-left: 10px;
		background: linear-gradient(#4a8cf4, #3b7bea);
	}
	.task.light svg { width: 16px; height: 16px; }
	.task.dark {
		width: 160px;
		margin-left: 1px;
		gap: 4px;
		padding-left: 11px;
		background: linear-gradient(#1a4cb0, #1e52bd);
	}
	.kbd { width: 14px; height: 13px; margin: 0 0 8px auto; }
	.tray {
		flex: none;
		align-self: stretch;
		box-sizing: border-box;
		width: 110px;
		margin-left: 13px;
		display: flex;
		align-items: center;
		padding-left: 11px;
		background: linear-gradient(#1a9ae8, #0f8be2 20%, #1186e0 85%, #0b6ec4);
		border-left: 1px solid #0d3f9c;
	}
	.shield { width: 13px; height: 15px; }
	.netpc { width: 15px; height: 15px; margin-left: 5px; }
	.tray span { margin-left: 11px; letter-spacing: .1px; }
</style>
